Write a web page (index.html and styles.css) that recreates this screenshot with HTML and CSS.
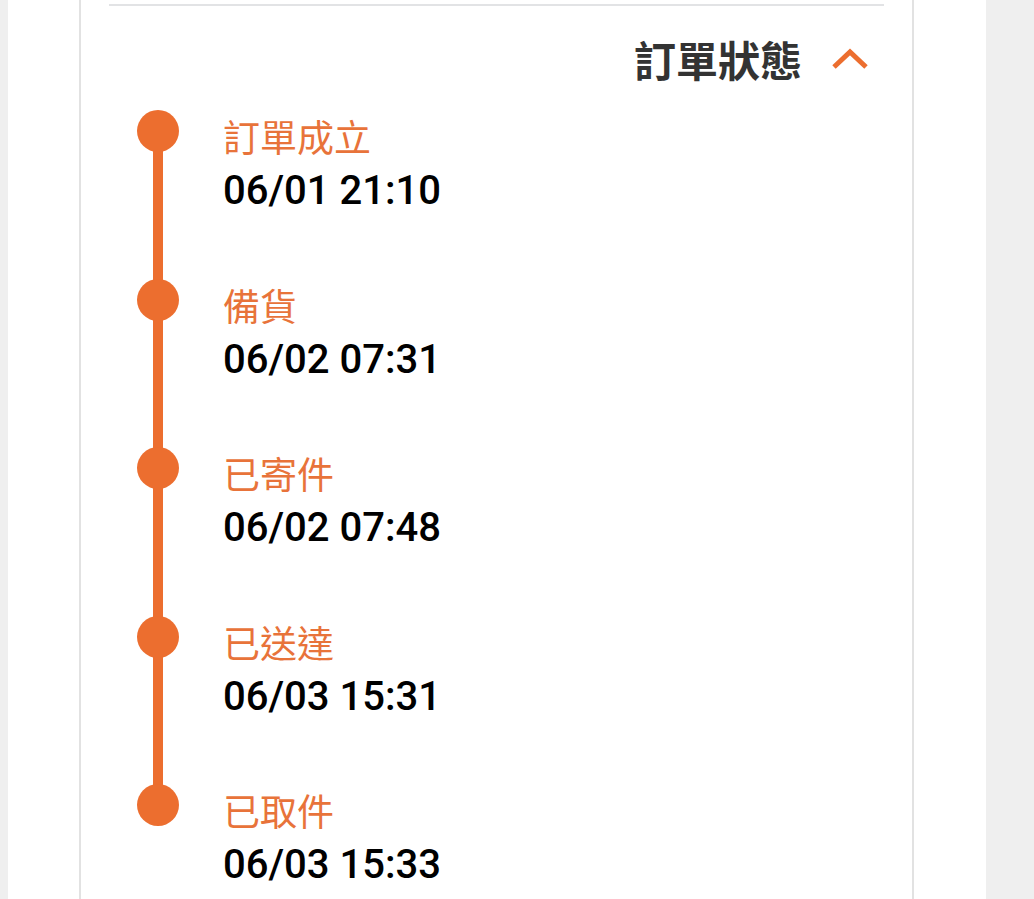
FILE: index.html
```html
<!DOCTYPE html>
<html lang="zh-Hant">
<head>
    <meta charset="UTF-8">
    <title>訂單狀態</title>
    <link rel="stylesheet" href="styles.css">
</head>
<body>
    <div class="page">
        <div class="card">
            <div class="divider"></div>
            <div class="status-header">
                <span class="status-title">訂單狀態</span>
                <svg class="chevron" width="40" height="24" viewBox="0 0 40 24">
                    <polyline points="4,20 20,5 36,20" fill="none" stroke="#ec6e2f" stroke-width="5"/>
                </svg>
            </div>
            <ul class="timeline">
                <li class="step">
                    <span class="dot"></span>
                    <div class="step-text">
                        <div class="step-name">訂單成立</div>
                        <div class="step-time">06/01 21:10</div>
                    </div>
                </li>
                <li class="step">
                    <span class="dot"></span>
                    <div class="step-text">
                        <div class="step-name">備貨</div>
                        <div class="step-time">06/02 07:31</div>
                    </div>
                </li>
                <li class="step">
                    <span class="dot"></span>
                    <div class="step-text">
                        <div class="step-name">已寄件</div>
                        <div class="step-time">06/02 07:48</div>
                    </div>
                </li>
                <li class="step">
                    <span class="dot"></span>
                    <div class="step-text">
                        <div class="step-name">已送達</div>
                        <div class="step-time">06/03 15:31</div>
                    </div>
                </li>
                <li class="step">
                    <span class="dot"></span>
                    <div class="step-text">
                        <div class="step-name">已取件</div>
                        <div class="step-time">06/03 15:33</div>
                    </div>
                </li>
            </ul>
        </div>
    </div>
</body>
</html>
```

FILE: styles.css
```css
body {
    margin: 0;
    background-color: #efefef;
    font-family: "Noto Sans CJK TC", "Noto Sans", sans-serif;
    height: 899px;
    overflow: hidden;
}

.page {
    margin-left: 8px;
    width: 978px;
    height: 899px;
    background: #fff;
    padding-left: 71px;
    box-sizing: border-box;
}

.card {
    width: 835px;
    height: 899px;
    overflow: hidden;
    border-left: 2px solid #e2e2e2;
    border-right: 2px solid #e2e2e2;
    padding: 4px 28px 0;
    box-sizing: border-box;
}

.divider {
    height: 2px;
    background: #e2e3e5;
}

.status-header {
    height: 104px;
    display: flex;
    align-items: center;
    justify-content: flex-end;
    gap: 28px;
    padding-right: 14px;
}

.status-title {
    font-size: 42px;
    font-weight: 700;
    color: #333;
}

.chevron {
    display: block;
    margin-top: 2px;
}

.timeline {
    list-style: none;
    margin: 0;
    padding: 0;
}

.step {
    position: relative;
    display: flex;
    height: 168.5px;
}

.step::before {
    content: "";
    position: absolute;
    left: 44px;
    top: 21px;
    width: 10px;
    height: 168.5px;
    background: #ec6e2f;
}

.step:last-child::before {
    display: none;
}

.dot {
    position: relative;
    flex: none;
    width: 42px;
    height: 42px;
    margin-left: 28px;
    border-radius: 50%;
    background: #ec6e2f;
}

.step-text {
    margin-left: 44px;
}

.step-name {
    font-size: 37px;
    line-height: 53px;
    color: #e8733a;
}

.step-time {
    font-family: Roboto, "Liberation Sans", sans-serif;
    font-size: 40px;
    font-weight: 500;
    line-height: 56px;
    color: #000;
}
```
